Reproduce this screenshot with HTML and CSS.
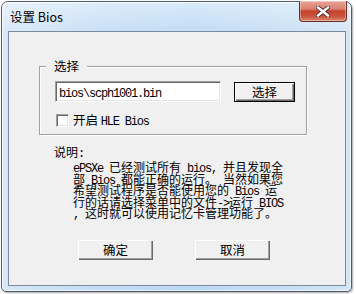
FILE: index.html
```html
<!DOCTYPE html>
<html>
<head>
<meta charset="utf-8">
<link rel="stylesheet" href="styles.css">
</head>
<body>
<div class="window">
  <div class="titlebar">
    <span class="title">设置 Bios</span>
    <div class="close">
      <svg width="14" height="11" viewBox="0 0 14 11">
        <path d="M2 1.5 L12 9.5 M12 1.5 L2 9.5" stroke="#4a2a28" stroke-width="4.2" stroke-linecap="square"/>
        <path d="M2 1.5 L12 9.5 M12 1.5 L2 9.5" stroke="#ffffff" stroke-width="2.4" stroke-linecap="square"/>
      </svg>
    </div>
  </div>
  <div class="client">
    <div class="group">
      <span class="group-label">选择</span>
      <div class="row">
        <div class="input"><span class="m">bios\scph1001.bin</span></div>
        <div class="btn default">选择</div>
      </div>
      <div class="check">
        <span class="box"></span>
        <span class="check-label">开启 <span class="m">HLE Bios</span></span>
      </div>
    </div>
    <div class="desc">
      <div class="desc-title">说明<span class="m">:</span></div>
      <div class="desc-text">
        <div class="ln"><span class="m">ePSXe </span>已经测试所有<span class="m"> bios, </span>并且发现全</div>
        <div class="ln">部<span class="m"> Bios </span>都能正确的运行。<span class="m"> </span>当然如果您</div>
        <div class="ln">希望测试程序是否能使用您的<span class="m"> Bios </span>运</div>
        <div class="ln">行的话请选择菜单中的文件<span class="m">-></span>运行<span class="m"> BIOS</span></div>
        <div class="ln"><span class="m">, </span>这时就可以使用记忆卡管理功能了。</div>
      </div>
    </div>
    <div class="actions">
      <div class="btn">确定</div>
      <div class="btn">取消</div>
    </div>
  </div>
</div>
</body>
</html>
```

FILE: styles.css
```css
html, body {
  margin: 0;
  padding: 0;
  background: #ffffff;
}
body {
  width: 356px;
  height: 294px;
  overflow: hidden;
  font-family: "Noto Sans CJK SC", "Noto Sans", sans-serif;
  font-size: 12px;
  color: #000;
}
.window {
  box-sizing: border-box;
  margin: 1px 0 0 1px;
  width: 351px;
  height: 291px;
  border: 1px solid #4d5d6d;
  border-radius: 7px 7px 5px 5px;
  background: linear-gradient(90deg, #d7e7f7 0%, #c2dcf5 30%, #bcd9f5 55%, #c6def5 80%, #d3e5f7 100%);
  box-shadow: inset 1px 1px 0 rgba(255,255,255,0.8), inset -1px -1px 0 rgba(255,255,255,0.6), 1px 1px 2px rgba(0,0,0,0.35);
  display: flex;
  flex-direction: column;
}
.titlebar {
  height: 29px;
  display: flex;
  justify-content: space-between;
  align-items: flex-start;
  padding: 0 4px 0 8px;
  background: linear-gradient(180deg, rgba(255,255,255,0.45) 0%, rgba(255,255,255,0.1) 100%);
  border-radius: 6px 6px 0 0;
}
.title {
  margin-top: 6px;
  font-size: 12.5px;
  line-height: 17px;
  color: #000;
}
.close {
  box-sizing: border-box;
  width: 48px;
  height: 21px;
  margin-top: -1px;
  border: 1px solid #6b2d22;
  border-top: none;
  border-radius: 0 0 4px 4px;
  background: linear-gradient(180deg, #e8a597 0%, #d98070 40%, #c4442f 50%, #c9503c 75%, #dc8a6e 100%);
  box-shadow: inset 0 0 0 1px rgba(255,255,255,0.35);
  display: flex;
  align-items: center;
  justify-content: center;
  padding-top: 1px;
}
.client {
  box-sizing: border-box;
  margin: 0 5px 5px 6px;
  height: 255px;
  border: 1px solid #7b8b9b;
  background: #f0f0f0;
  padding: 34px 0 0 30px;
  display: flex;
  flex-direction: column;
}
.m {
  font-family: "Liberation Mono", monospace;
  font-size: 12px;
  letter-spacing: -1.2px;
}
.group {
  position: relative;
  box-sizing: border-box;
  width: 268px;
  height: 69px;
  border: 1px solid #a0a0a0;
  box-shadow: inset 1px 1px 0 #fff, 1px 1px 0 #fff;
  padding: 14px 0 0 15px;
}
.group-label {
  position: absolute;
  left: 6px;
  top: -8px;
  padding: 0 8px;
  background: #f0f0f0;
  font-size: 12.5px;
  line-height: 14px;
}
.row {
  display: flex;
  align-items: flex-start;
  gap: 13px;
}
.input {
  box-sizing: border-box;
  width: 166px;
  height: 21px;
  background: #fff;
  border-top: 1px solid #a0a0a0;
  border-left: 1px solid #a0a0a0;
  border-right: 1px solid #fff;
  border-bottom: 1px solid #fff;
  box-shadow: inset 1px 1px 0 #696969, inset -1px -1px 0 #e3e3e3;
  padding: 0 0 0 3px;
  line-height: 19px;
}
.btn {
  box-sizing: border-box;
  width: 75px;
  height: 20px;
  background: #f0f0f0;
  box-shadow: inset 1px 1px 0 #fff, inset -1px -1px 0 #696969, inset -2px -2px 0 #a0a0a0;
  display: flex;
  align-items: center;
  justify-content: center;
  font-size: 12.5px;
  line-height: 16px;
}
.btn.default {
  width: 61px;
  margin-top: 1px;
  border: 1px solid #000;
}
.check {
  display: flex;
  align-items: center;
  margin: 12px 0 0 1px;
  height: 13px;
}
.box {
  box-sizing: border-box;
  width: 13px;
  height: 13px;
  background: #fff;
  border-top: 1px solid #a0a0a0;
  border-left: 1px solid #a0a0a0;
  border-right: 1px solid #fff;
  border-bottom: 1px solid #fff;
  box-shadow: inset 1px 1px 0 #696969, inset -1px -1px 0 #e3e3e3;
}
.check-label {
  margin-left: 4px;
  font-size: 12.5px;
  line-height: 14px;
}
.desc {
  margin: 11px 0 0 15px;
}
.desc-title {
  line-height: 12px;
}
.desc-text {
  margin: 1px 0 0 19px;
  white-space: nowrap;
}
.ln {
  height: 11.6px;
  line-height: 11.6px;
}
.actions {
  display: flex;
  gap: 42px;
  margin: 21px 0 0 39px;
}
```
